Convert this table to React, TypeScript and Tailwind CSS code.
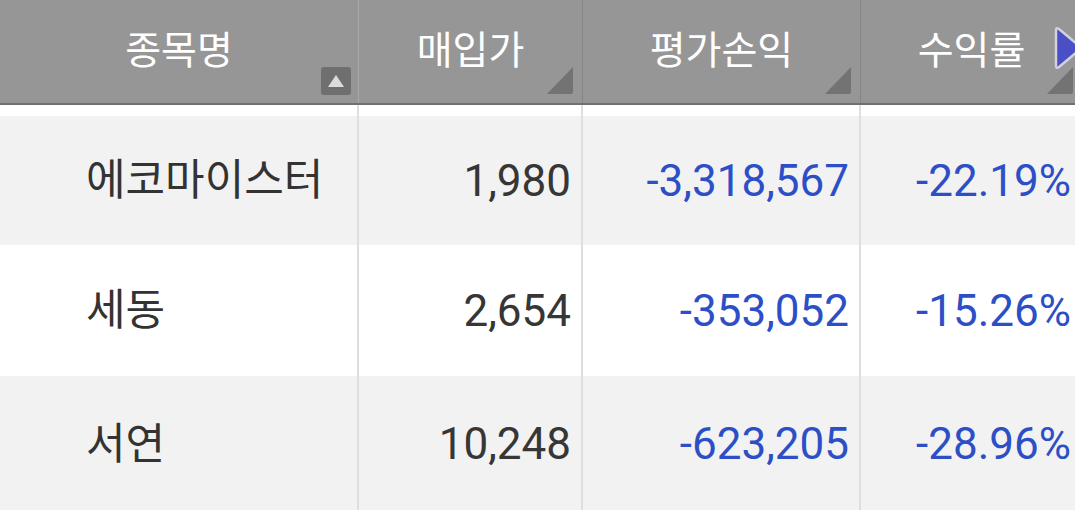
import React from "react";

const FONT = { fontFamily: 'Roboto, "Noto Sans CJK KR", sans-serif' };

interface Row {
  name: string;
  price: string;
  profit: string;
  rate: string;
  h: string;
  bg: string;
}

const rows: Row[] = [
  { name: "에코마이스터", price: "1,980", profit: "-3,318,567", rate: "-22.19%", h: "h-[129px]", bg: "bg-[#f2f2f2]" },
  { name: "세동", price: "2,654", profit: "-353,052", rate: "-15.26%", h: "h-[131px]", bg: "bg-white" },
  { name: "서연", price: "10,248", profit: "-623,205", rate: "-28.96%", h: "h-[136px]", bg: "bg-[#f2f2f2]" },
];

const CornerMark = () => (
  <svg
    width="30"
    height="30"
    viewBox="0 0 30 30"
    className="absolute right-[7px] bottom-[8px]"
  >
    <path d="M28 2 L28 27 Q28 29 26 29 L2 29 Z" fill="#737373" />
  </svg>
);

const HeaderCell = ({
  label,
  children,
  divider,
}: {
  label: string;
  children?: React.ReactNode;
  divider: string;
}) => (
  <div
    className={`relative flex items-center justify-center h-[103px] border-r ${divider}`}
  >
    <span className="text-[39px] text-white leading-none" style={FONT}>
      {label}
    </span>
    {children}
  </div>
);

export default function App() {
  return (
    <div className="w-[1075px] h-[510px] overflow-hidden bg-white" style={FONT}>
      <div className="w-[1083px]">
        {/* header */}
        <div className="grid grid-cols-[359px_224px_278px_222px] bg-[#969696] border-b-2 border-[#707070]">
          <HeaderCell label="종목명" divider="border-[#a9a9a9]">
            <div className="absolute right-[7px] bottom-[8px] w-[30px] h-[28px] rounded-[3px] bg-[#6f6f6f] flex items-center justify-center">
              <svg width="18" height="14" viewBox="0 0 18 14">
                <path d="M9 1 L17 13 L1 13 Z" fill="#dcdcdc" />
              </svg>
            </div>
          </HeaderCell>
          <HeaderCell label="매입가" divider="border-[#858585]">
            <CornerMark />
          </HeaderCell>
          <HeaderCell label="평가손익" divider="border-[#858585]">
            <CornerMark />
          </HeaderCell>
          <HeaderCell label="수익률" divider="border-transparent">
            <svg
              width="28"
              height="46"
              viewBox="0 0 28 46"
              className="absolute left-[192px] top-[25px]"
            >
              <path
                d="M3 5 Q3 2 6 4 L25 20 Q28 23 25 26 L6 42 Q3 44 3 41 Z"
                fill="#4a4fc5"
                stroke="#d2d2dc"
                strokeWidth="2.5"
                strokeLinejoin="round"
              />
            </svg>
            <CornerMark />
          </HeaderCell>
        </div>

        {/* spacer */}
        <div className="grid grid-cols-[359px_224px_278px_222px] h-[11px]">
          <div className="border-r-2 border-[#e0e0e0]" />
          <div className="border-r-2 border-[#e0e0e0]" />
          <div className="border-r-2 border-[#e0e0e0]" />
          <div />
        </div>

        {/* body rows */}
        {rows.map((r) => (
          <div
            key={r.name}
            className={`grid grid-cols-[359px_224px_278px_222px] ${r.h} ${r.bg}`}
          >
            <div className="flex items-center pl-[86px] border-r-2 border-[#dedede]">
              <span className="text-[43px] text-[#333333] leading-none">
                {r.name}
              </span>
            </div>
            <div className="flex items-center justify-end pr-[10px] border-r-2 border-[#dedede]">
              <span className="text-[44px] text-[#363636] leading-none">
                {r.price}
              </span>
            </div>
            <div className="flex items-center justify-end pr-[10px] border-r-2 border-[#dedede]">
              <span className="text-[44px] text-[#2c4fc7] leading-none">
                {r.profit}
              </span>
            </div>
            <div className="flex items-center justify-end pr-[12px]">
              <span className="text-[44px] text-[#2c4fc7] leading-none">
                {r.rate}
              </span>
            </div>
          </div>
        ))}
      </div>
    </div>
  );
}
